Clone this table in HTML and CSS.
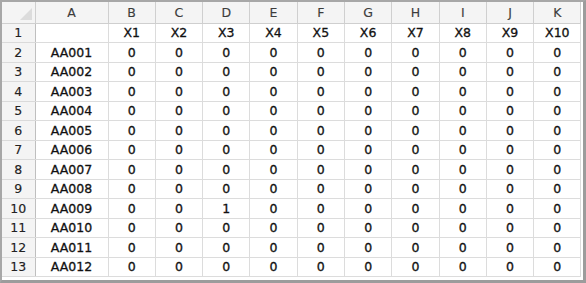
FILE: index.html
```html
<!DOCTYPE html>
<html>
<head>
<meta charset="utf-8">
<link rel="stylesheet" href="styles.css">
</head>
<body>
<div class="frame">
<table class="sheet">
<colgroup>
<col class="c-rh"><col class="c-a">
<col class="c-n"><col class="c-n"><col class="c-n"><col class="c-n"><col class="c-n">
<col class="c-n"><col class="c-n"><col class="c-n"><col class="c-n"><col class="c-n">
</colgroup>
<thead>
<tr class="hdr"><th class="corner"><span class="tri"></span></th><th>A</th><th>B</th><th>C</th><th>D</th><th>E</th><th>F</th><th>G</th><th>H</th><th>I</th><th>J</th><th>K</th></tr>
</thead>
<tbody>
<tr><th>1</th><td></td><td>X1</td><td>X2</td><td>X3</td><td>X4</td><td>X5</td><td>X6</td><td>X7</td><td>X8</td><td>X9</td><td>X10</td></tr>
<tr><th>2</th><td>AA001</td><td>0</td><td>0</td><td>0</td><td>0</td><td>0</td><td>0</td><td>0</td><td>0</td><td>0</td><td>0</td></tr>
<tr><th>3</th><td>AA002</td><td>0</td><td>0</td><td>0</td><td>0</td><td>0</td><td>0</td><td>0</td><td>0</td><td>0</td><td>0</td></tr>
<tr><th>4</th><td>AA003</td><td>0</td><td>0</td><td>0</td><td>0</td><td>0</td><td>0</td><td>0</td><td>0</td><td>0</td><td>0</td></tr>
<tr><th>5</th><td>AA004</td><td>0</td><td>0</td><td>0</td><td>0</td><td>0</td><td>0</td><td>0</td><td>0</td><td>0</td><td>0</td></tr>
<tr><th>6</th><td>AA005</td><td>0</td><td>0</td><td>0</td><td>0</td><td>0</td><td>0</td><td>0</td><td>0</td><td>0</td><td>0</td></tr>
<tr><th>7</th><td>AA006</td><td>0</td><td>0</td><td>0</td><td>0</td><td>0</td><td>0</td><td>0</td><td>0</td><td>0</td><td>0</td></tr>
<tr><th>8</th><td>AA007</td><td>0</td><td>0</td><td>0</td><td>0</td><td>0</td><td>0</td><td>0</td><td>0</td><td>0</td><td>0</td></tr>
<tr><th>9</th><td>AA008</td><td>0</td><td>0</td><td>0</td><td>0</td><td>0</td><td>0</td><td>0</td><td>0</td><td>0</td><td>0</td></tr>
<tr><th>10</th><td>AA009</td><td>0</td><td>0</td><td>1</td><td>0</td><td>0</td><td>0</td><td>0</td><td>0</td><td>0</td><td>0</td></tr>
<tr><th>11</th><td>AA010</td><td>0</td><td>0</td><td>0</td><td>0</td><td>0</td><td>0</td><td>0</td><td>0</td><td>0</td><td>0</td></tr>
<tr><th>12</th><td>AA011</td><td>0</td><td>0</td><td>0</td><td>0</td><td>0</td><td>0</td><td>0</td><td>0</td><td>0</td><td>0</td></tr>
<tr><th>13</th><td>AA012</td><td>0</td><td>0</td><td>0</td><td>0</td><td>0</td><td>0</td><td>0</td><td>0</td><td>0</td><td>0</td></tr>
</tbody>
</table>
</div>
</body>
</html>
```
FILE: styles.css
```css
html, body {
  margin: 0;
  padding: 0;
  background: #ffffff;
}
.frame {
  box-sizing: border-box;
  width: 586px;
  height: 283px;
  border-top: 2px solid #a7a7a7;
  border-left: 2px solid #a7a7a7;
  border-right: 3px solid #9c9c9c;
  border-bottom: 3px solid #9c9c9c;
  background: #ffffff;
  overflow: hidden;
}
.sheet {
  border-collapse: collapse;
  table-layout: fixed;
  width: 579px;
  font-family: "DejaVu Sans", Verdana, sans-serif;
  font-size: 12.5px;
  color: #111111;
  -webkit-text-stroke: 0.3px currentColor;
}
.c-rh { width: 33px; }
.c-a { width: 73px; }
.c-n { width: 47.3px; }
.sheet td, .sheet th {
  padding: 0;
  text-align: center;
  vertical-align: middle;
  height: 18px;
  line-height: 14px;
  white-space: nowrap;
  overflow: hidden;
}
.sheet tbody tr:nth-child(even) td, .sheet tbody tr:nth-child(even) th { height: 19px; }
.sheet td {
  border-right: 1px solid #dcdcdc;
  border-bottom: 1px solid #dcdcdc;
}
.sheet th {
  font-weight: normal;
  background: #f4f4f4;
  color: #222222;
  border-right: 1px solid #cfcfcf;
  border-bottom: 1px solid #dadada;
  -webkit-text-stroke: 0.15px currentColor;
}
.sheet thead th {
  height: 21px;
  color: #3c3c3c;
  border-bottom: 1px solid #cfcfcf;
}
.sheet tbody th {
  border-right: 1px solid #bfbfbf;
}
.corner {
  position: relative;
}
.tri {
  position: absolute;
  right: 3px;
  bottom: 3px;
  width: 0;
  height: 0;
  border-left: 12px solid transparent;
  border-bottom: 12px solid #dcdcdc;
}
```
